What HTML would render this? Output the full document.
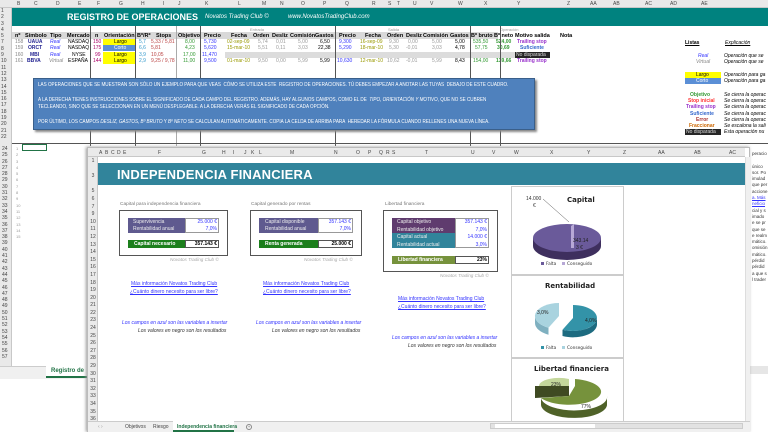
<!DOCTYPE html><html><head><meta charset="utf-8"><style>
*{margin:0;padding:0;box-sizing:border-box}
body{width:768px;height:432px;overflow:hidden;background:#fff;font-family:"Liberation Sans",sans-serif;position:relative}
.a{position:absolute;white-space:nowrap}
.s{font-size:5px;line-height:6px}
.h{font-size:5.5px;font-weight:bold;line-height:6px}
</style></head><body>
<!-- BACK SHEET -->
<div class="a" style="left:0;top:0;width:768px;height:8px;background:#e9e9e9;border-bottom:1px solid #c8c8c8"></div>
<div class="a s" style="top:1px;left:0;width:768px;color:#444;font-size:5px">
<span class="a" style="left:17px">B</span><span class="a" style="left:34px">C</span><span class="a" style="left:56px">D</span><span class="a" style="left:78px">E</span><span class="a" style="left:97px">F</span><span class="a" style="left:119px">G</span><span class="a" style="left:141px">H</span><span class="a" style="left:163px">I</span><span class="a" style="left:178px">J</span><span class="a" style="left:205px">K</span><span class="a" style="left:238px">L</span><span class="a" style="left:262px">M</span><span class="a" style="left:280px">N</span><span class="a" style="left:301px">O</span><span class="a" style="left:323px">P</span><span class="a" style="left:345px">Q</span><span class="a" style="left:372px">R</span><span class="a" style="left:388px">S</span><span class="a" style="left:397px">T</span><span class="a" style="left:413px">U</span><span class="a" style="left:430px">V</span><span class="a" style="left:458px">W</span><span class="a" style="left:484px">X</span><span class="a" style="left:517px">Y</span><span class="a" style="left:567px">Z</span><span class="a" style="left:590px">AA</span><span class="a" style="left:613px">AB</span><span class="a" style="left:645px">AC</span><span class="a" style="left:670px">AD</span><span class="a" style="left:701px">AE</span></div>
<div class="a" style="left:0;top:8px;width:12px;height:424px;background:#e9e9e9;border-right:1px solid #c8c8c8"></div>
<div class="a s" style="left:1px;top:8px;color:#444;line-height:6.3px;font-size:5px">1<br>2<br>3<br>4<br>5<br>7<br>8<br>9<br>10<br>11<br>12<br>13<br>14<br>15<br>16<br>17<br>18<br>19<br>20<br>21<br>22</div>
<div class="a" style="left:12px;top:8px;width:756px;height:18px;background:#00827f"></div>
<div class="a" style="left:67px;top:12px;color:#fff;font-size:9px;font-weight:bold">REGISTRO DE OPERACIONES</div>
<div class="a" style="left:205px;top:14px;color:#fff;font-size:6px;font-style:italic">Novatos Trading Club ©</div>
<div class="a" style="left:288px;top:14px;color:#fff;font-size:6px;font-style:italic">www.NovatosTradingClub.com</div>
<div class="a" style="left:12px;top:32px;width:486px;height:7px;background:#d9d9d9"></div>
<div class="a s" style="left:250px;top:27px;color:#999;font-size:4px">Entrada</div>
<div class="a s" style="left:388px;top:27px;color:#999;font-size:4px">Salida</div>
<div class="a s" style="left:500px;top:27px;color:#999;font-size:4px">Operación</div>
<div class="a h" style="top:33px;left:0;width:768px">
<span class="a" style="left:15px">nº</span><span class="a" style="left:25px">Símbolo</span><span class="a" style="left:50px">Tipo</span><span class="a" style="left:67px">Mercado</span><span class="a" style="left:95px">n</span><span class="a" style="left:104px">Orientación</span><span class="a" style="left:137px">Bº/Rº</span><span class="a" style="left:156px">Stops</span><span class="a" style="left:178px">Objetivo</span><span class="a" style="left:204px">Precio</span><span class="a" style="left:231px">Fecha</span><span class="a" style="left:253px">Orden</span><span class="a" style="left:272px">Desliz</span><span class="a" style="left:290px">Comisión</span><span class="a" style="left:315px">Gastos</span><span class="a" style="left:339px">Precio</span><span class="a" style="left:365px">Fecha</span><span class="a" style="left:387px">Orden</span><span class="a" style="left:406px">Desliz</span><span class="a" style="left:423px">Comisión</span><span class="a" style="left:450px">Gastos</span><span class="a" style="left:471px">Bº bruto</span><span class="a" style="left:494px">Bº neto</span><span class="a" style="left:515px">Motivo salida</span><span class="a" style="left:560px">Nota</span></div>
<!-- data rows -->
<div class="a" style="left:103px;top:39px;width:32px;height:6px;background:#ffff00"></div>
<div class="a" style="left:103px;top:45px;width:32px;height:6px;background:#5b8fd6"></div>
<div class="a" style="left:103px;top:52px;width:32px;height:6px;background:#ffff00"></div>
<div class="a" style="left:103px;top:58px;width:32px;height:6px;background:#ffff00"></div>
<div class="a" style="left:225px;top:52px;width:290px;height:6px;background:#dcdcdc"></div>
<div class="a" style="left:515px;top:52px;width:35px;height:6px;background:#262626"></div>
<div class="a s" style="left:0;top:39px;width:600px;height:30px">
<div class="a" style="top:0;left:0;width:600px"><span class="a" style="left:15px;color:#888">158</span><span class="a" style="left:28px;color:#1f1f8f;font-weight:bold">UAUA</span><span class="a" style="left:50px;color:#33f;font-style:italic">Real</span><span class="a" style="left:68px">NASDAQ</span><span class="a" style="left:93px;color:#a06">150</span><span class="a" style="left:114px">Largo</span><span class="a" style="left:139px;color:#39c">5,7</span><span class="a" style="left:151px;color:#b44">5,33 / 5,81</span><span class="a" style="left:185px;color:#393">8,00</span><span class="a" style="left:204px;color:#33f">5,730</span><span class="a" style="left:227px;color:#990">02-sep-09</span><span class="a" style="left:258px;color:#999">5,74</span><span class="a" style="left:276px;color:#999">0,01</span><span class="a" style="left:298px;color:#999">5,00</span><span class="a" style="left:320px">6,50</span><span class="a" style="left:339px;color:#33f">9,300</span><span class="a" style="left:360px;color:#990">16-sep-09</span><span class="a" style="left:389px;color:#999">9,30</span><span class="a" style="left:408px;color:#999">0,00</span><span class="a" style="left:432px;color:#999">5,00</span><span class="a" style="left:455px">5,00</span><span class="a" style="left:473px;color:#393">535,50</span><span class="a" style="left:496px;color:#393;font-weight:bold">524,00</span><span class="a" style="left:517px;color:#93c;font-weight:bold">Trailing stop</span></div>
<div class="a" style="top:6px;left:0;width:600px"><span class="a" style="left:15px;color:#888">159</span><span class="a" style="left:28px;color:#1f1f8f;font-weight:bold">ORCT</span><span class="a" style="left:50px;color:#33f;font-style:italic">Real</span><span class="a" style="left:68px">NASDAQ</span><span class="a" style="left:93px;color:#a06">175</span><span class="a" style="left:114px;color:#fff">Corto</span><span class="a" style="left:139px;color:#39c">6,6</span><span class="a" style="left:151px;color:#b44">5,81</span><span class="a" style="left:185px;color:#393">4,23</span><span class="a" style="left:204px;color:#33f">5,620</span><span class="a" style="left:227px;color:#990">15-mar-10</span><span class="a" style="left:258px;color:#999">5,51</span><span class="a" style="left:276px;color:#999">0,11</span><span class="a" style="left:298px;color:#999">3,03</span><span class="a" style="left:318px">22,38</span><span class="a" style="left:339px;color:#33f">5,290</span><span class="a" style="left:360px;color:#990">18-mar-10</span><span class="a" style="left:389px;color:#999">5,30</span><span class="a" style="left:406px;color:#999">-0,01</span><span class="a" style="left:432px;color:#999">3,03</span><span class="a" style="left:455px">4,78</span><span class="a" style="left:475px;color:#393">57,75</span><span class="a" style="left:497px;color:#393;font-weight:bold">30,69</span><span class="a" style="left:520px;color:#36c;font-weight:bold">Suficiente</span></div>
<div class="a" style="top:13px;left:0;width:600px"><span class="a" style="left:15px;color:#888">160</span><span class="a" style="left:30px;color:#1f1f8f;font-weight:bold">MBI</span><span class="a" style="left:50px;color:#33f;font-style:italic">Real</span><span class="a" style="left:72px">NYSE</span><span class="a" style="left:95px;color:#a06">99</span><span class="a" style="left:114px">Largo</span><span class="a" style="left:139px;color:#39c">3,9</span><span class="a" style="left:151px;color:#b44">10,05</span><span class="a" style="left:183px;color:#393">17,00</span><span class="a" style="left:202px;color:#33f">11,470</span><span class="a" style="left:516px;color:#ddd">No disparada</span></div>
<div class="a" style="top:19px;left:0;width:600px"><span class="a" style="left:15px;color:#888">161</span><span class="a" style="left:27px;color:#1f1f8f;font-weight:bold">BBVA</span><span class="a" style="left:49px;color:#888;font-style:italic">Virtual</span><span class="a" style="left:68px">ESPAÑA</span><span class="a" style="left:93px;color:#a06">144</span><span class="a" style="left:114px">Largo</span><span class="a" style="left:139px;color:#39c">2,9</span><span class="a" style="left:151px;color:#b44">9,25 / 9,78</span><span class="a" style="left:183px;color:#393">11,00</span><span class="a" style="left:204px;color:#33f">9,500</span><span class="a" style="left:227px;color:#990">01-mar-10</span><span class="a" style="left:258px;color:#999">9,50</span><span class="a" style="left:276px;color:#999">0,00</span><span class="a" style="left:298px;color:#999">5,99</span><span class="a" style="left:320px">5,99</span><span class="a" style="left:337px;color:#33f">10,630</span><span class="a" style="left:360px;color:#990">12-mar-10</span><span class="a" style="left:387px;color:#999">10,62</span><span class="a" style="left:406px;color:#999">-0,01</span><span class="a" style="left:432px;color:#999">5,99</span><span class="a" style="left:455px">8,43</span><span class="a" style="left:473px;color:#393">154,00</span><span class="a" style="left:496px;color:#393;font-weight:bold">139,66</span><span class="a" style="left:517px;color:#93c;font-weight:bold">Trailing stop</span></div>
</div>
<!-- column separator lines -->
<div class="a" style="left:90px;top:26px;width:1px;height:120px;background:#555"></div>
<div class="a" style="left:135px;top:26px;width:1px;height:120px;background:#555"></div>
<div class="a" style="left:176px;top:26px;width:1px;height:120px;background:#aaa"></div>
<div class="a" style="left:200px;top:26px;width:1px;height:120px;background:#555"></div>
<div class="a" style="left:335px;top:26px;width:1px;height:120px;background:#555"></div>
<div class="a" style="left:470px;top:26px;width:1px;height:120px;background:#555"></div>
<div class="a" style="left:500px;top:26px;width:1px;height:120px;background:#555"></div>
<div class="a" style="left:12px;top:143px;width:756px;height:1px;background:#555"></div>
<!-- textbox -->
<div class="a" style="left:33px;top:78px;width:502px;height:52px;background:#4f81bd;border:1px solid #3a5f8a;box-shadow:2px 2px 2px #888"></div>
<div class="a" style="left:38px;top:82px;color:#fff;font-size:5.6px;line-height:7.4px;transform:scaleX(0.82);transform-origin:0 0">LAS OPERACIONES QUE SE MUESTRAN SON SÓLO UN EJEMPLO PARA QUE VEAS &nbsp;CÓMO SE UTILIZA ESTE &nbsp;REGISTRO DE OPERACIONES. TÚ DEBES EMPEZAR A ANOTAR LAS TUYAS &nbsp;DEBAJO DE ESTE CUADRO.<br><br>A LA DERECHA TIENES INSTRUCCIONES SOBRE EL SIGNIFICADO DE CADA CAMPO DEL REGISTRO. ADEMÁS, HAY ALGUNOS CAMPOS, COMO EL DE &nbsp;<i>TIPO, ORIENTACIÓN Y MOTIVO</i>, QUE NO SE CUBREN<br>TECLEANDO, SINO QUE SE SELECCIONAN EN UN MENÚ DESPLEGABLE. A LA DERECHA VERÁS EL SIGNIFICADO DE CADA OPCIÓN.<br><br>POR ÚLTIMO, LOS CAMPOS <i>DESLIZ, GASTOS, Bº BRUTO</i> Y <i>Bº NETO</i> SE CALCULAN AUTOMÁTICAMENTE. COPIA LA CELDA DE ARRIBA PARA &nbsp;HEREDAR LA FÓRMULA CUANDO RELLENES UNA NUEVA LÍNEA.</div>
<!-- right lists -->
<div class="a s" style="left:685px;top:40px;font-weight:bold;text-decoration:underline">Listas</div>
<div class="a s" style="left:725px;top:40px;font-style:italic;text-decoration:underline">Explicación</div>
<div class="a s" style="left:698px;top:53px;color:#33f;font-style:italic">Real</div>
<div class="a s" style="left:696px;top:59px;color:#888;font-style:italic">Virtual</div>
<div class="a s" style="left:724px;top:53px;font-style:italic">Operación que se</div>
<div class="a s" style="left:724px;top:59px;font-style:italic">Operación que se</div>
<div class="a" style="left:685px;top:72px;width:36px;height:6px;background:#ff0"></div>
<div class="a" style="left:685px;top:78px;width:36px;height:6px;background:#5b8fd6"></div>
<div class="a s" style="left:696px;top:72px">Largo</div><div class="a s" style="left:696px;top:78px;color:#fff">Corto</div>
<div class="a s" style="left:724px;top:72px;font-style:italic">Operación para ga</div>
<div class="a s" style="left:724px;top:78px;font-style:italic">Operación para ga</div>
<div class="a s" style="left:690px;top:92px;color:#393;font-weight:bold">Objetivo</div>
<div class="a s" style="left:688px;top:98px;color:#f33;font-weight:bold">Stop inicial</div>
<div class="a s" style="left:686px;top:104px;color:#93c;font-weight:bold">Trailing stop</div>
<div class="a s" style="left:690px;top:111px;color:#36c;font-weight:bold">Suficiente</div>
<div class="a s" style="left:696px;top:117px;color:#a33;font-weight:bold">Error</div>
<div class="a s" style="left:689px;top:123px;color:#c60;font-weight:bold">Fraccionar</div>
<div class="a" style="left:685px;top:129px;width:36px;height:6px;background:#262626"></div>
<div class="a s" style="left:686px;top:129px;color:#ddd">No disparada</div>
<div class="a s" style="left:724px;top:92px;font-style:italic;line-height:6.2px">Se cierra la operac<br>Se cierra la operac<br>Se cierra la operac<br>Se cierra la operac<br>Se cierra la operac<br>Se escalona la sali<br>Esta operación nu</div>
<!-- back row numbers lower -->
<div class="a s" style="left:2px;top:146px;color:#444;line-height:6.3px;font-size:5px">24<br>25<br>26<br>27<br>28<br>29<br>30<br>31<br>32<br>33<br>34<br>35<br>36<br>37<br>38<br>39<br>40<br>41<br>42<br>43<br>44<br>45<br>46<br>47<br>48<br>49<br>50<br>51<br>52<br>53<br>54<br>55<br>56<br>57</div>
<div class="a s" style="left:16px;top:146px;color:#999;line-height:6.3px;font-size:4px">1<br>2<br>3<br>4<br>5<br>6<br>7<br>8<br>9<br>10<br>11<br>12<br>13<br>14<br>15</div>
<div class="a" style="left:22px;top:144px;width:25px;height:7px;border:1px solid #217346"></div>
<div class="a" style="left:0;top:366px;width:87px;height:13px;background:#f0f0f0;border-top:1px solid #ccc"></div>
<div class="a" style="left:46px;top:366px;width:41px;height:12px;background:#fff;border-bottom:2px solid #217346"></div>
<div class="a" style="left:51px;top:368px;color:#217346;font-size:6px;font-weight:bold">Registro de</div>
<div class="a" style="left:0;top:379px;width:87px;height:53px;background:#fff"></div>
<!-- right strip text -->
<div class="a s" style="left:752px;top:151px;font-size:4.5px;line-height:6.3px;color:#333">peracio<br><br>único<br>sor. Po<br>imulad<br>que per<br>accione<br><span style="color:#33f;text-decoration:underline">a. Más</span><br><span style="color:#33f;text-decoration:underline">neficio</span><br>cial y s<br>imado<br>e se pr<br>que se<br>e realm<br>mático.<br>omisión<br>mático.<br>pérdid<br>pérdid<br>a que s<br>l trader</div>
<div class="a" style="left:750px;top:366px;width:18px;height:8px;background:#e6e6e6"></div>

<!-- FRONT WINDOW -->
<div class="a" style="left:87px;top:147px;width:663px;height:285px;background:#fff;border:1px solid #bbb;box-shadow:-1px 0 3px #999"></div>
<div class="a" style="left:88px;top:148px;width:657px;height:9px;background:#eaeaea;border-bottom:1px solid #c8c8c8"></div>
<div class="a" style="top:150px;left:0;width:768px;font-size:5px;color:#444">
<span class="a" style="left:99px">A</span><span class="a" style="left:105px">B</span><span class="a" style="left:111px">C</span><span class="a" style="left:117px">D</span><span class="a" style="left:123px">E</span><span class="a" style="left:158px">F</span><span class="a" style="left:202px">G</span><span class="a" style="left:222px">H</span><span class="a" style="left:233px">I</span><span class="a" style="left:244px">J</span><span class="a" style="left:251px">K</span><span class="a" style="left:259px">L</span><span class="a" style="left:290px">M</span><span class="a" style="left:334px">N</span><span class="a" style="left:356px">O</span><span class="a" style="left:368px">P</span><span class="a" style="left:379px">Q</span><span class="a" style="left:386px">R</span><span class="a" style="left:392px">S</span><span class="a" style="left:425px">T</span><span class="a" style="left:471px">U</span><span class="a" style="left:492px">V</span><span class="a" style="left:514px">W</span><span class="a" style="left:550px">X</span><span class="a" style="left:587px">Y</span><span class="a" style="left:623px">Z</span><span class="a" style="left:658px">AA</span><span class="a" style="left:694px">AB</span><span class="a" style="left:729px">AC</span></div>
<div class="a" style="left:88px;top:157px;width:10px;height:264px;background:#eaeaea;border-right:1px solid #c8c8c8"></div>
<div class="a" style="left:89px;top:158px;font-size:5px;color:#444;line-height:7.6px;text-align:center;width:8px">1<br><br>3<br><br>5<br>6<br>7<br>9<br>10<br>11<br>12<br>13<br>14<br>15<br>16<br>17<br>18<br>19<br>20<br>21<br>22<br>23<br>24<br>25<br>26<br>27<br>28<br>29<br>30<br>31<br>32<br>33<br>34<br>35<br>36</div>
<div class="a" style="left:98px;top:163px;width:647px;height:22px;background:#31849b"></div>
<div class="a" style="left:117px;top:167px;color:#fff;font-size:13px;font-weight:bold;letter-spacing:0.2px">INDEPENDENCIA FINANCIERA</div>
<div class="a" style="left:745px;top:157px;width:5px;height:264px;background:#f0f0f0;border-left:1px solid #ddd"></div>

<!-- box1 -->
<div class="a s" style="left:120px;top:202px;color:#777;font-size:4.8px">Capital para independencia financiera</div>
<div class="a" style="left:119px;top:210px;width:109px;height:46px;border:1px solid #555"></div>
<div class="a" style="left:128px;top:218px;width:57px;height:15px;background:#5f5a8f"></div>
<div class="a" style="left:185px;top:218px;width:34px;height:15px;border:1px solid #999"></div>
<div class="a s" style="left:133px;top:219px;color:#eee;line-height:7px">Supervivencia<br>Rentabilidad anual</div>
<div class="a s" style="left:185px;top:219px;width:32px;text-align:right;color:#33f;line-height:7px">25.000 €<br>7,0%</div>
<div class="a" style="left:128px;top:240px;width:57px;height:8px;background:#1c7f1c"></div>
<div class="a" style="left:185px;top:240px;width:34px;height:8px;border:1px solid #555"></div>
<div class="a s" style="left:134px;top:241px;color:#fff;font-weight:bold">Capital necesario</div>
<div class="a s" style="left:185px;top:241px;width:32px;text-align:right;font-weight:bold">357.143 €</div>
<div class="a s" style="left:170px;top:257px;color:#aaa;font-style:italic;font-size:4.6px">Novatos Trading Club ©</div>
<div class="a s" style="left:131px;top:280px;color:#33f;text-decoration:underline;line-height:8px">Más información Novatos Trading Club<br><span style="margin-left:-1px">¿Cuánto dinero necesito para ser libre?</span></div>
<div class="a s" style="left:122px;top:320px;color:#33f;font-style:italic;line-height:7.6px">Los campos en azul son las variables a insertar<br><span style="color:#333;margin-left:16px">Los valores en negro son los resultados</span></div>
<!-- box2 -->
<div class="a s" style="left:251px;top:202px;color:#777;font-size:4.8px">Capital generado por rentas</div>
<div class="a" style="left:250px;top:210px;width:112px;height:46px;border:1px solid #555"></div>
<div class="a" style="left:259px;top:218px;width:59px;height:15px;background:#5f5a8f"></div>
<div class="a" style="left:318px;top:218px;width:35px;height:15px;border:1px solid #999"></div>
<div class="a s" style="left:265px;top:219px;color:#eee;line-height:7px">Capital disponible<br>Rentabilidad anual</div>
<div class="a s" style="left:318px;top:219px;width:33px;text-align:right;color:#33f;line-height:7px">357.143 €<br>7,0%</div>
<div class="a" style="left:259px;top:240px;width:59px;height:8px;background:#1c7f1c"></div>
<div class="a" style="left:318px;top:240px;width:35px;height:8px;border:1px solid #555"></div>
<div class="a s" style="left:265px;top:241px;color:#fff;font-weight:bold">Renta generada</div>
<div class="a s" style="left:318px;top:241px;width:33px;text-align:right;font-weight:bold">25.000 €</div>
<div class="a s" style="left:304px;top:257px;color:#aaa;font-style:italic;font-size:4.6px">Novatos Trading Club ©</div>
<div class="a s" style="left:263px;top:280px;color:#33f;text-decoration:underline;line-height:8px">Más información Novatos Trading Club<br>¿Cuánto dinero necesito para ser libre?</div>
<div class="a s" style="left:256px;top:320px;color:#33f;font-style:italic;line-height:7.6px">Los campos en azul son las variables a insertar<br><span style="color:#333;margin-left:16px">Los valores en negro son los resultados</span></div>
<!-- box3 -->
<div class="a s" style="left:385px;top:202px;color:#777;font-size:4.8px">Libertad financiera</div>
<div class="a" style="left:383px;top:210px;width:115px;height:62px;border:1px solid #555"></div>
<div class="a" style="left:392px;top:218px;width:63px;height:15px;background:#5f3b6e"></div>
<div class="a" style="left:392px;top:233px;width:63px;height:15px;background:#31849b"></div>
<div class="a" style="left:455px;top:218px;width:34px;height:30px;border:1px solid #999"></div>
<div class="a s" style="left:397px;top:219px;color:#eee;line-height:7.5px">Capital objetivo<br>Rentabilidad objetivo<br>Capital actual<br>Rentabilidad actual</div>
<div class="a s" style="left:455px;top:219px;width:32px;text-align:right;color:#33f;line-height:7.5px">357.143 €<br>7,0%<br>14.000 €<br>3,0%</div>
<div class="a" style="left:392px;top:256px;width:63px;height:8px;background:#76923c"></div>
<div class="a" style="left:455px;top:256px;width:34px;height:8px;border:1px solid #555"></div>
<div class="a s" style="left:398px;top:257px;color:#fff;font-weight:bold">Libertad financiera</div>
<div class="a s" style="left:455px;top:257px;width:32px;text-align:right;font-weight:bold">23%</div>
<div class="a s" style="left:440px;top:273px;color:#aaa;font-style:italic;font-size:4.6px">Novatos Trading Club ©</div>
<div class="a s" style="left:398px;top:295px;color:#33f;text-decoration:underline;line-height:8px">Más información Novatos Trading Club<br>¿Cuánto dinero necesito para ser libre?</div>
<div class="a s" style="left:392px;top:335px;color:#33f;font-style:italic;line-height:7.6px">Los campos en azul son las variables a insertar<br><span style="color:#333;margin-left:16px">Los valores en negro son los resultados</span></div>

<!-- charts -->
<svg class="a" style="left:511px;top:186px" width="114" height="236" viewBox="0 0 114 236">
<rect x="0.5" y="0.5" width="112" height="88" fill="#fff" stroke="#ccc"/>
<rect x="0.5" y="89.5" width="112" height="82" fill="#fff" stroke="#ccc"/>
<rect x="0.5" y="172.5" width="112" height="64" fill="#fff" stroke="#ccc"/>
<text x="56" y="16" font-family="DejaVu Sans" font-size="7" font-weight="bold" fill="#222">Capital</text>
<text x="15" y="14" font-family="Liberation Sans" font-size="5" fill="#333">14.000</text><text x="22" y="21" font-family="Liberation Sans" font-size="5" fill="#333">€</text>
<line x1="32" y1="13" x2="58" y2="36" stroke="#555" stroke-width="0.5"/>
<path d="M22,52 L22,60 A34,14 0 0 0 90,60 L90,52 Z" fill="#3e2f5e"/>
<ellipse cx="56" cy="52" rx="34" ry="14" fill="#6a5a9a"/>
<path d="M60,40 L63,38 L63,62 L60,62Z" fill="#b7a8d6"/>
<text x="62" y="56" font-family="Liberation Sans" font-size="5" fill="#222">343.14</text><text x="65" y="63" font-family="Liberation Sans" font-size="5" fill="#222">3 €</text>
<rect x="30" y="76" width="3" height="3" fill="#6a5a9a"/><text x="35" y="79" font-family="DejaVu Sans" font-size="4.3" fill="#333">Falta</text>
<rect x="51" y="76" width="3" height="3" fill="#b7a8d6"/><text x="56" y="79" font-family="DejaVu Sans" font-size="4.3" fill="#333">Conseguido</text>
<text x="34" y="102" font-family="DejaVu Sans" font-size="7" font-weight="bold" fill="#222">Rentabilidad</text>
<path d="M62,132 L62,119 A24,13 0 1 1 51.5,143.7 Z" fill="#3393a8"/>
<path d="M51.5,143.7 L51.5,150 A24,13 0 0 0 86,139 L86,132 A24,13 0 0 1 51.5,143.7Z" fill="#1d6b80"/>
<path d="M24,130 L24,137 A24,13 0 0 0 37.5,148.7 L37.5,141.7 A24,13 0 0 1 24,130Z" fill="#7fb0c0"/>
<path d="M48,130 L37.5,141.7 A24,13 0 0 1 48,117 Z" fill="#a9d3df"/>
<text x="26" y="128" font-family="Liberation Sans" font-size="5" fill="#222">3,0%</text>
<text x="74" y="136" font-family="Liberation Sans" font-size="5" fill="#222">4,0%</text>
<rect x="30" y="160" width="3" height="3" fill="#3393a8"/><text x="35" y="163" font-family="DejaVu Sans" font-size="4.3" fill="#333">Falta</text>
<rect x="51" y="160" width="3" height="3" fill="#a9d3df"/><text x="56" y="163" font-family="DejaVu Sans" font-size="4.3" fill="#333">Conseguido</text>
<text x="23" y="185" font-family="DejaVu Sans" font-size="7" font-weight="bold" fill="#222">Libertad financiera</text>
<path d="M24,200 L58,200 L58,210 L24,212Z" fill="#3f4a22"/>
<path d="M28,200 A20,8 0 0 1 58,193 L58,200Z" fill="#c4d79b"/>
<path d="M64,193 A32,13 0 1 1 30,212 L58,210 L64,200Z" fill="#76923c"/>
<path d="M30,212 A32,13 0 0 0 96,210 L96,218 A32,13 0 0 1 30,219Z" fill="#4f6228"/>
<text x="40" y="200" font-family="Liberation Sans" font-size="5" fill="#222">23%</text>
<text x="70" y="222" font-family="Liberation Sans" font-size="5" fill="#222">77%</text>
</svg>

<!-- front bottom tab bar -->
<div class="a" style="left:88px;top:421px;width:662px;height:11px;background:#f0f0f0;border-top:1px solid #ccc"></div>
<div class="a" style="left:98px;top:424px;font-size:5px;color:#999">‹ ›</div>
<div class="a" style="left:125px;top:424px;font-size:5px;color:#444">Objetivos</div>
<div class="a" style="left:153px;top:424px;font-size:5px;color:#444">Riesgo</div>
<div class="a" style="left:173px;top:421px;width:61px;height:11px;background:#fff;border-bottom:2px solid #217346"></div>
<div class="a" style="left:177px;top:424px;font-size:5px;color:#217346;font-weight:bold">Independencia financiera</div>
<div class="a" style="left:246px;top:424px;width:6px;height:6px;border:1px solid #888;border-radius:50%;font-size:4px;line-height:4px;text-align:center;color:#666">+</div>
<div class="a" style="left:490px;top:423px;width:253px;height:6px;background:#e2e2e2;border:1px solid #ccc"></div>
<div class="a" style="left:495px;top:424px;width:100px;height:4px;background:#fff"></div>
</body></html>
